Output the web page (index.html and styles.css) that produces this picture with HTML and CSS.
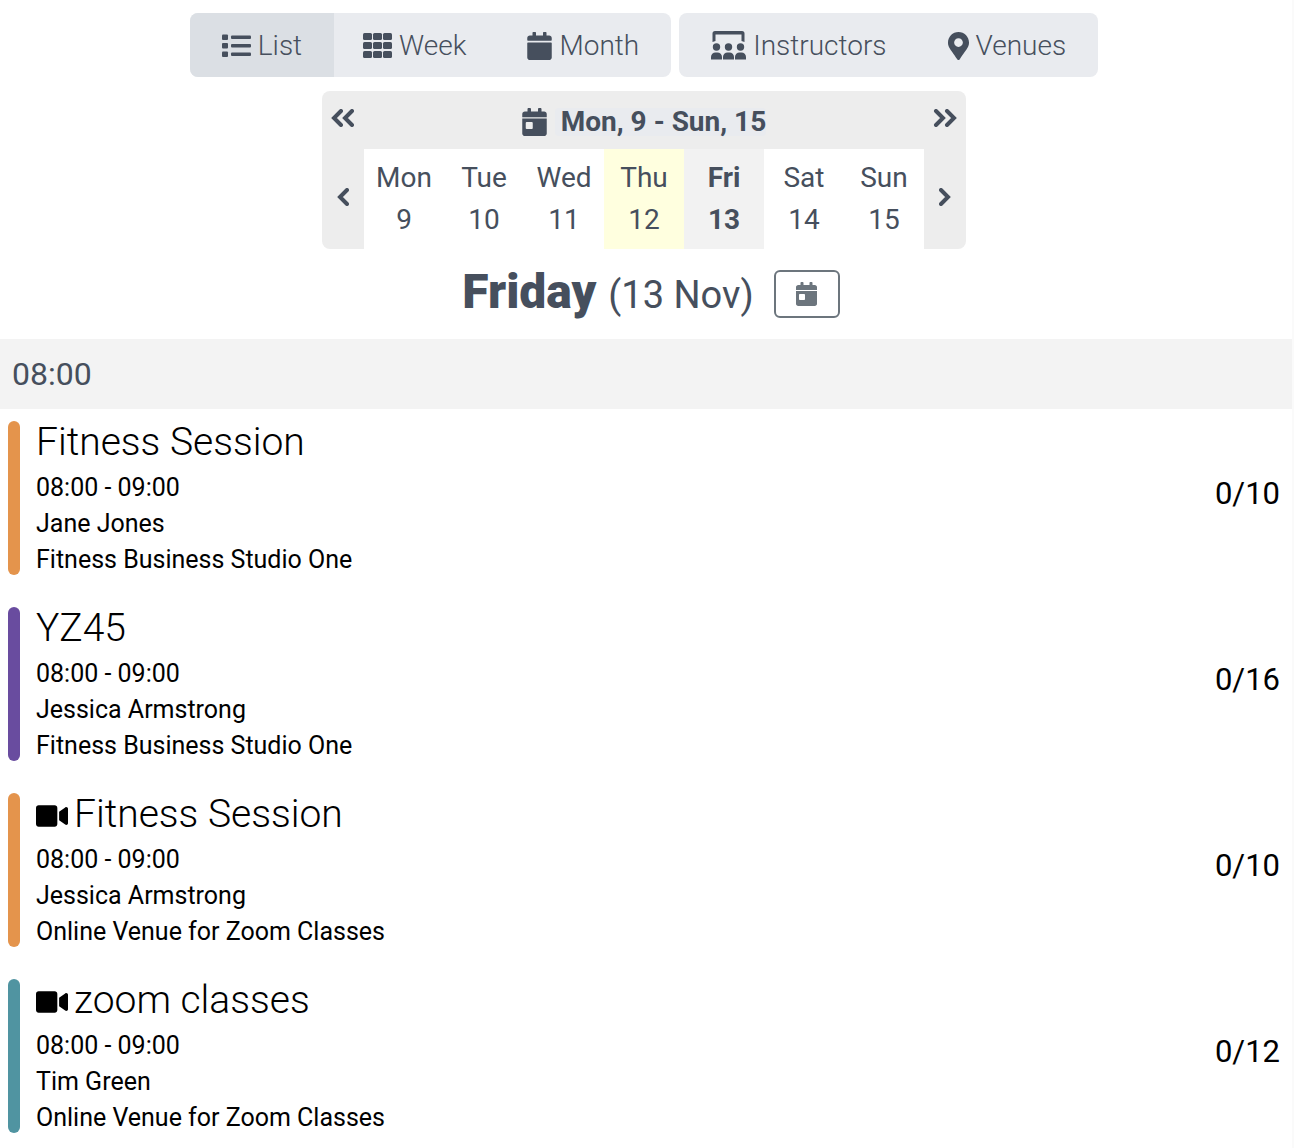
FILE: index.html
```
<!DOCTYPE html>
<html lang="en">
<head>
    <meta charset="UTF-8">
    <meta name="viewport" content="width=device-width, initial-scale=1.0">
    <title>Timetable</title>
    <link rel="stylesheet" href="styles.css">
</head>
<body>

<!-- icons used more than once -->
<svg class="sprite" aria-hidden="true">
    <symbol id="calendar-day" viewBox="0 0 448 512">
        <path d="M0 464c0 26.500 21.500 48 48 48h352c26.500 0 48-21.500 48-48V192H0v272zm64-192c0-8.800 7.200-16 16-16h96c8.800 0 16 7.200 16 16v96c0 8.800-7.200 16-16 16H80c-8.800 0-16-7.200-16-16v-96zM400 64h-48V16c0-8.800-7.200-16-16-16h-32c-8.800 0-16 7.200-16 16v48H160V16c0-8.800-7.200-16-16-16h-32c-8.800 0-16 7.200-16 16v48H48C21.500 64 0 85.500 0 112v58h448v-58c0-26.500-21.500-48-48-48z"/>
    </symbol>
    <symbol id="video" viewBox="0 64 576 384">
        <path d="M336.200 64H47.800C21.400 64 0 85.400 0 111.800v288.400C0 426.600 21.400 448 47.800 448h288.400c26.400 0 47.800-21.400 47.800-47.800V111.800c0-26.400-21.400-47.800-47.800-47.800zm189.400 37.700L416 177.300v157.400l109.600 75.500c21.200 14.600 50.400-.3 50.400-25.800V127.500c0-25.400-29.100-40.400-50.400-25.800z"/>
    </symbol>
</svg>

<header class="header">
    <div class="toolbar">
        <div class="btn-group">
            <button type="button" class="btn active">
                <svg class="icon" width="29" height="24" viewBox="0 0 29 24">
                    <rect x="0" y="0.500" width="6" height="5.500" rx="1"/><rect x="9" y="1.500" width="20" height="3.500" rx="1"/>
                    <rect x="0" y="9" width="6" height="5.500" rx="1"/><rect x="9" y="10" width="20" height="3.500" rx="1"/>
                    <rect x="0" y="17.500" width="6" height="5.500" rx="1"/><rect x="9" y="18.500" width="20" height="3.500" rx="1"/>
                </svg>
                List
            </button>
            <button type="button" class="btn">
                <svg class="icon" width="29" height="25" viewBox="0 0 29 25">
                    <rect x="0" y="0" width="9" height="7" rx="1.500"/><rect x="10" y="0" width="9" height="7" rx="1.500"/><rect x="20" y="0" width="9" height="7" rx="1.500"/>
                    <rect x="0" y="9" width="9" height="7" rx="1.500"/><rect x="10" y="9" width="9" height="7" rx="1.500"/><rect x="20" y="9" width="9" height="7" rx="1.500"/>
                    <rect x="0" y="18" width="9" height="7" rx="1.500"/><rect x="10" y="18" width="9" height="7" rx="1.500"/><rect x="20" y="18" width="9" height="7" rx="1.500"/>
                </svg>
                Week
            </button>
            <button type="button" class="btn">
                <svg class="icon" width="25" height="28" viewBox="0 0 448 512">
                    <path d="M12 192h424c6.600 0 12 5.400 12 12v260c0 26.500-21.500 48-48 48H48c-26.500 0-48-21.500-48-48V204c0-6.600 5.400-12 12-12zm436-44v-36c0-26.500-21.500-48-48-48h-48V12c0-6.600-5.400-12-12-12h-40c-6.600 0-12 5.400-12 12v52H160V12c0-6.600-5.400-12-12-12h-40c-6.600 0-12 5.400-12 12v52H48C21.500 64 0 85.500 0 112v36c0 6.600 5.400 12 12 12h424c6.600 0 12-5.400 12-12z"/>
                </svg>
                Month
            </button>
        </div>
        <div class="btn-group">
            <button type="button" class="btn">
                <svg class="icon" width="35" height="29" viewBox="0.5 0 35 29">
                    <path d="M2 11V2.500A2.500 2.500 0 0 1 4.500 0H31.500A2.500 2.500 0 0 1 34 2.500V11L31 10V3.500H5V10Z"/>
                    <circle cx="6" cy="16" r="3.700"/><circle cx="18" cy="16" r="3.700"/><circle cx="30" cy="16" r="3.700"/>
                    <path d="M.5 28.500V26A4.500 4.500 0 0 1 5 21.500H7A4.500 4.500 0 0 1 11.500 26V28.500ZM12.500 28.500V26A4.500 4.500 0 0 1 17 21.500H19A4.500 4.500 0 0 1 23.500 26V28.500ZM24.500 28.500V26A4.500 4.500 0 0 1 29 21.500H31A4.500 4.500 0 0 1 35.500 26V28.500Z"/>
                </svg>
                Instructors
            </button>
            <button type="button" class="btn">
                <svg class="icon" width="21" height="28" viewBox="0 0 384 512">
                    <path d="M172.268 501.670C26.970 291.031 0 269.413 0 192 0 85.961 85.961 0 192 0s192 85.961 192 192c0 77.413-26.970 99.031-172.268 309.670-9.535 13.774-29.930 13.773-39.464 0zM192 272c44.183 0 80-35.817 80-80s-35.817-80-80-80-80 35.817-80 80 35.817 80 80 80z"/>
                </svg>
                Venues
            </button>
        </div>
    </div>

    <div class="picker">
        <div class="picker-head">
            <button type="button" class="arrow" aria-label="Previous month">
                <svg width="24" height="18" viewBox="0 0 24 18"><path d="M10 2L3 9L10 16M21 2L14 9L21 16"/></svg>
            </button>
            <button type="button" class="range">
                <svg class="icon" width="25" height="28"><use href="#calendar-day"/></svg>
                <span class="range-text">Mon, 9 - Sun, 15</span>
            </button>
            <button type="button" class="arrow" aria-label="Next month">
                <svg width="24" height="18" viewBox="0 0 24 18"><path d="M3 2L10 9L3 16M14 2L21 9L14 16"/></svg>
            </button>
        </div>
        <div class="picker-week">
            <button type="button" class="arrow" aria-label="Previous week">
                <svg width="12" height="18" viewBox="0 0 12 18"><path d="M10 2L3 9L10 16"/></svg>
            </button>
            <button type="button" class="day">Mon<br>9</button>
            <button type="button" class="day">Tue<br>10</button>
            <button type="button" class="day">Wed<br>11</button>
            <button type="button" class="day today">Thu<br>12</button>
            <button type="button" class="day selected">Fri<br>13</button>
            <button type="button" class="day">Sat<br>14</button>
            <button type="button" class="day">Sun<br>15</button>
            <button type="button" class="arrow" aria-label="Next week">
                <svg width="12" height="18" viewBox="0 0 12 18"><path d="M2 2L9 9L2 16"/></svg>
            </button>
        </div>
    </div>

    <div class="day-title">
        <h1>Friday <small>(13 Nov)</small></h1>
        <button type="button" class="btn-outline" aria-label="Choose date">
            <svg class="icon" width="21" height="24"><use href="#calendar-day"/></svg>
        </button>
    </div>
</header>

<h2 class="hour">08:00</h2>

<div class="session">
    <div class="bar orange"></div>
    <div class="info">
        <h3>Fitness Session</h3>
        <p>08:00 - 09:00</p>
        <p>Jane Jones</p>
        <p>Fitness Business Studio One</p>
    </div>
    <div class="count">0/10</div>
</div>

<div class="session">
    <div class="bar purple"></div>
    <div class="info">
        <h3>YZ45</h3>
        <p>08:00 - 09:00</p>
        <p>Jessica Armstrong</p>
        <p>Fitness Business Studio One</p>
    </div>
    <div class="count">0/16</div>
</div>

<div class="session">
    <div class="bar orange"></div>
    <div class="info">
        <h3><svg class="video" width="32" height="22"><use href="#video"/></svg>Fitness Session</h3>
        <p>08:00 - 09:00</p>
        <p>Jessica Armstrong</p>
        <p>Online Venue for Zoom Classes</p>
    </div>
    <div class="count">0/10</div>
</div>

<div class="session">
    <div class="bar teal"></div>
    <div class="info">
        <h3><svg class="video" width="32" height="22"><use href="#video"/></svg>zoom classes</h3>
        <p>08:00 - 09:00</p>
        <p>Tim Green</p>
        <p>Online Venue for Zoom Classes</p>
    </div>
    <div class="count">0/12</div>
</div>

</body>
</html>
```
FILE: styles.css
```
* {
    box-sizing: border-box;
}
body {
    margin: 0;
    border-right: 2px solid #fafafa;
    background-color: #fff;
    color: #464f5d;
    font-family: Roboto, "Liberation Sans", sans-serif;
    font-size: 28px;
    line-height: 42px;
}
h1, h2, h3, p {
    margin: 0;
}
button {
    padding: 0;
    border: none;
    background: none;
    color: inherit;
    font: inherit;
    cursor: pointer;
}
.sprite {
    display: none;
}
.icon {
    flex: none;
    fill: currentColor;
}
.header {
    padding-right: 4px;
}

/* view buttons */
.toolbar {
    display: flex;
    flex-wrap: wrap;
    justify-content: center;
    gap: 8px;
    padding: 13px 0 14px;
}
.btn-group {
    display: flex;
    border-radius: 8px;
    background-color: #e9ebef;
    overflow: hidden;
}
.btn {
    display: flex;
    align-items: center;
    gap: 7px;
    height: 64px;
    padding: 1px 32px 0;
    font-weight: 300;
}
.btn + .btn {
    padding-left: 29px;
}
.btn.active {
    background-color: #dbdfe4;
}

/* week picker */
.picker {
    width: fit-content;
    margin: 0 auto;
    border-radius: 8px;
    background-color: #ededed;
    overflow: hidden;
}
.picker-head, .picker-week {
    display: flex;
}
.picker-head {
    justify-content: space-between;
    height: 58px;
}
.arrow {
    display: flex;
    align-items: center;
    justify-content: center;
    width: 42px;
    padding-bottom: 4px;
}
.arrow path {
    fill: none;
    stroke: currentColor;
    stroke-width: 4;
    stroke-linecap: round;
}
.range {
    display: flex;
    align-items: center;
    gap: 8px;
    padding-top: 3px;
    font-weight: 700;
}
.range-text {
    padding-left: 6px;
    border-radius: 4px;
    background-color: #e9ebef;
    line-height: 28px;
}
.day {
    width: 80px;
    padding: 8px 0;
    background-color: #fff;
}
.day.today {
    background-color: #ffffdf;
}
.day.selected {
    background-color: #f2f2f2;
    font-weight: 700;
}

/* day heading */
.day-title {
    display: flex;
    align-items: center;
    justify-content: center;
    gap: 20px;
    height: 90px;
    padding: 0 0 1px 14px;
}
.day-title h1 {
    font-size: 48px;
    font-weight: 900;
    line-height: 58px;
}
.day-title small {
    font-size: 38px;
    font-weight: 400;
}
.btn-outline {
    display: flex;
    align-items: center;
    justify-content: center;
    width: 66px;
    height: 48px;
    border: 2px solid #6c757d;
    border-radius: 6px;
    color: #6c757d;
}
.hour {
    padding: 11px 12px;
    background-color: #f3f3f3;
    font-size: 32px;
    font-weight: 400;
    line-height: 48px;
}

/* sessions */
.session {
    display: flex;
    padding: 12px 12px 17px 8px;
    color: #000;
}
.bar {
    width: 12px;
    margin: 0 16px 3px 0;
    border-radius: 6px;
}
.orange {
    background-color: #e4944c;
}
.purple {
    background-color: #694c9f;
}
.teal {
    background-color: #5094a1;
}
.info {
    flex: 1;
    font-size: 25px;
    line-height: 36px;
}
.info h3 {
    margin-bottom: 7px;
    font-size: 39px;
    font-weight: 300;
    line-height: 42px;
}
.video {
    margin-right: 6px;
    vertical-align: baseline;
}
.count {
    align-self: center;
    padding-bottom: 12px;
    font-size: 31px;
}
```
